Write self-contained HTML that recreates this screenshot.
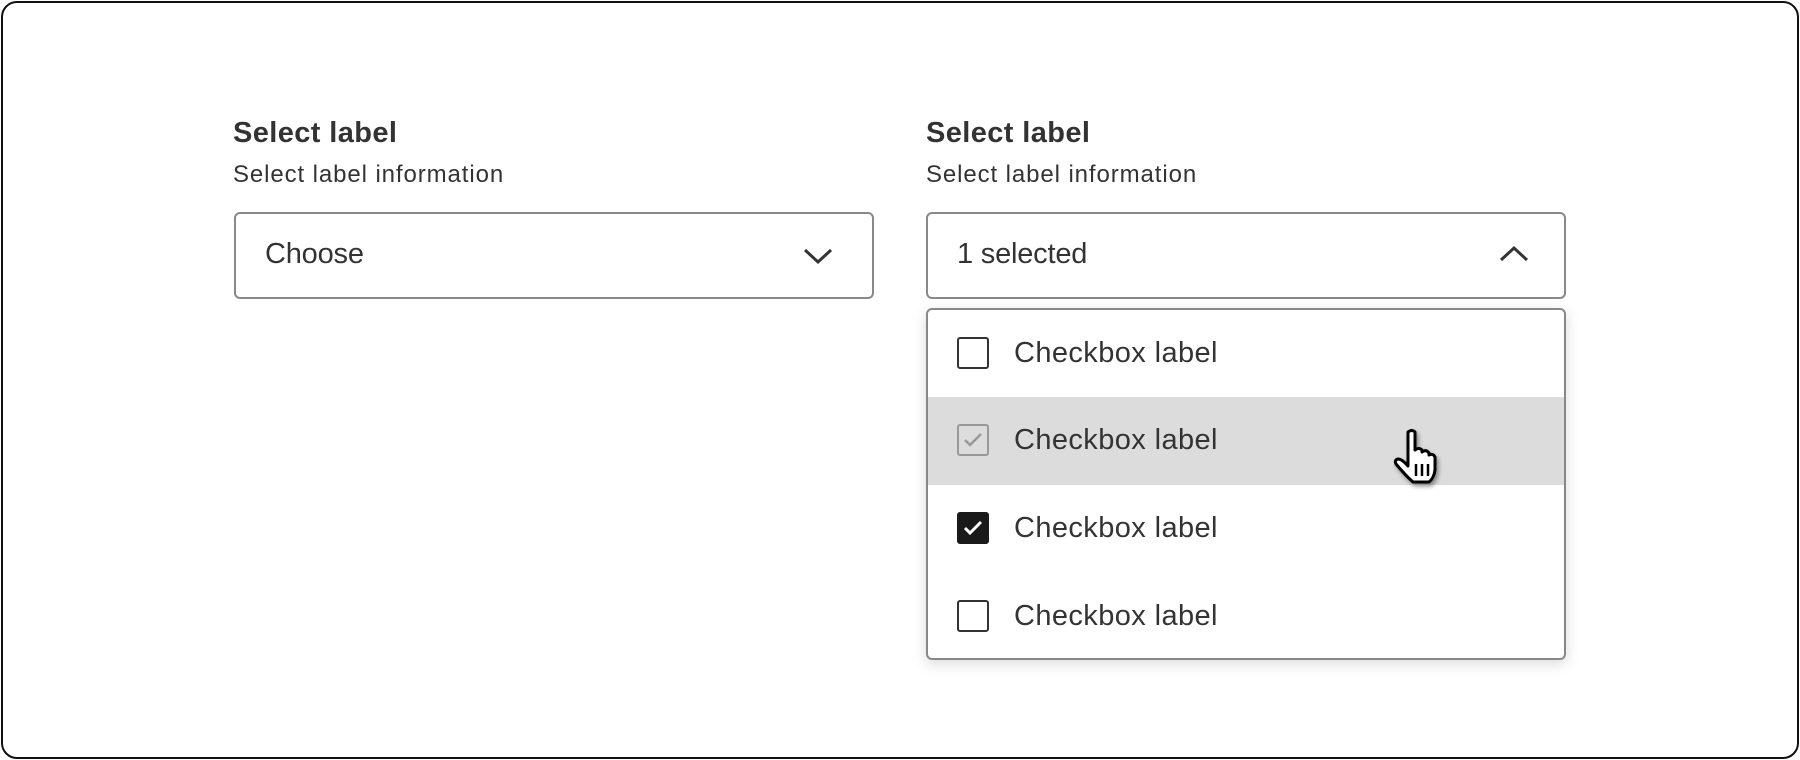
<!DOCTYPE html>
<html><head><style>
*{box-sizing:border-box;margin:0;padding:0}
body{width:1800px;height:760px;background:#fff;font-family:"Liberation Sans",sans-serif;color:#333;position:relative;overflow:hidden}
.frame{position:absolute;left:1px;top:1px;width:1798px;height:758px;border:2px solid #111;border-radius:16px}
.lbl{position:absolute;font-size:29px;font-weight:bold;color:#333;letter-spacing:0.4px}
.info{position:absolute;font-size:24px;color:#333;letter-spacing:0.9px}
.box{position:absolute;border:2px solid #888;border-radius:6px;background:#fff}
.box span{position:absolute;left:29px;top:24px;font-size:29px;color:#333;letter-spacing:-0.2px}
.dd{position:absolute;left:926px;top:308px;width:640px;height:352px;border:2px solid #888;border-radius:6px;background:#fff;box-shadow:0 4px 14px rgba(0,0,0,.15);overflow:hidden}
.row{position:absolute;left:0;width:100%;height:88px}
.cb{position:absolute;left:29px;top:27px;width:32px;height:32px;border:2px solid #333;border-radius:3px}
.row span{position:absolute;left:86px;top:27px;font-size:29px;color:#333;letter-spacing:0.4px}
</style></head><body>
<div class="frame"></div>
<div class="lbl" style="left:233px;top:117px">Select label</div>
<div class="info" style="left:233px;top:161px">Select label information</div>
<div class="box" style="left:234px;top:212px;width:640px;height:87px"><span>Choose</span>
<svg style="position:absolute;left:566px;top:32px" width="32" height="20" viewBox="0 0 32 20"><path d="M3 4 L16 16 L29 4" fill="none" stroke="#333" stroke-width="3"/></svg></div>
<div class="lbl" style="left:926px;top:117px">Select label</div>
<div class="info" style="left:926px;top:161px">Select label information</div>
<div class="box" style="left:926px;top:212px;width:640px;height:87px"><span>1 selected</span>
<svg style="position:absolute;left:570px;top:30px" width="32" height="20" viewBox="0 0 32 20"><path d="M3 16 L16 4 L29 16" fill="none" stroke="#333" stroke-width="3"/></svg></div>
<div class="dd">
<div class="row" style="top:0"><div class="cb"></div><span>Checkbox label</span></div>
<div class="row" style="top:87px;background:#dcdcdc"><div class="cb" style="border-color:#999"><svg width="28" height="28" viewBox="0 0 28 28" style="position:absolute;left:0;top:0"><path d="M6 14 L11 19 L22 8" fill="none" stroke="#999" stroke-width="2.5"/></svg></div><span>Checkbox label</span></div>
<div class="row" style="top:175px"><div class="cb" style="background:#1a1a1a;border-color:#1a1a1a"><svg width="28" height="28" viewBox="0 0 28 28" style="position:absolute;left:0;top:0"><path d="M6 14 L11 19 L22 8" fill="none" stroke="#fff" stroke-width="3"/></svg></div><span>Checkbox label</span></div>
<div class="row" style="top:263px"><div class="cb"></div><span>Checkbox label</span></div>
</div>
<svg style="position:absolute;left:1390px;top:428px;filter:drop-shadow(2px 3px 2px rgba(0,0,0,.4))" width="50" height="60" viewBox="0 0 50 60">
<path d="M18 4 Q22 1 25 4 L25 22 Q29 19 32 22 L32 24 Q36 21 39 25 L39 27 Q43 25 45 29 L45 42 Q44 50 39 54 L23 54 Q16 48 6 36 Q4 32 8 31 Q12 31 18 38 Z" fill="#fff" stroke="#000" stroke-width="3" stroke-linejoin="round"/>
<path d="M26 36 V48 M32 36 V48 M38 36 V48" stroke="#000" stroke-width="2.5"/>
</svg>
</body></html>
